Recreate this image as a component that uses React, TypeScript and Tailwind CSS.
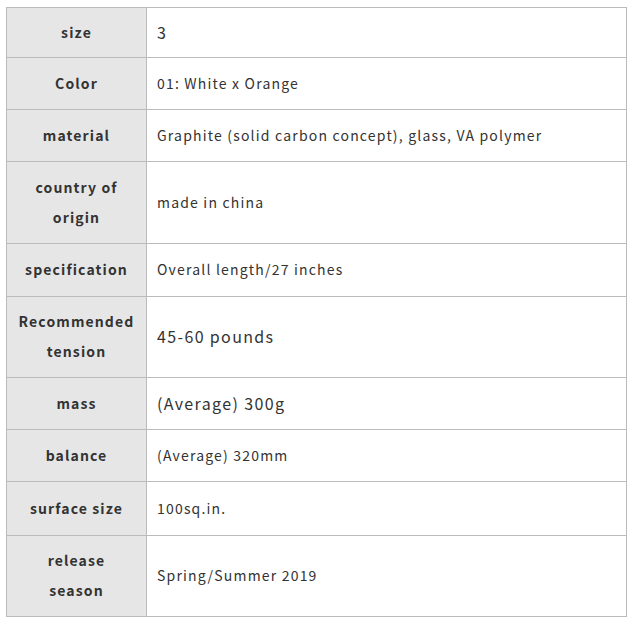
const rows: { label: string[]; value: string; big?: boolean; h: string }[] = [
  { label: ["size"], value: "3", big: true, h: "h-[50px]" },
  { label: ["Color"], value: "01: White x Orange", h: "h-[52px]" },
  { label: ["material"], value: "Graphite (solid carbon concept), glass, VA polymer", h: "h-[52px]" },
  { label: ["country of", "origin"], value: "made in china", h: "h-[82px]" },
  { label: ["specification"], value: "Overall length/27 inches", h: "h-[53px]" },
  { label: ["Recommended", "tension"], value: "45-60 pounds", big: true, h: "h-[81px]" },
  { label: ["mass"], value: "(Average) 300g", big: true, h: "h-[52px]" },
  { label: ["balance"], value: "(Average) 320mm", h: "h-[52px]" },
  { label: ["surface size"], value: "100sq.in.", h: "h-[54px]" },
  { label: ["release", "season"], value: "Spring/Summer 2019", h: "h-[81px]" },
];

export default function App() {
  return (
    <div className="bg-white w-[635px] h-[624px] pt-[7px] pl-[6px] font-['Noto_Sans_CJK_JP','Noto_Sans',sans-serif] text-[#333]">
      <table className="w-[621px] border-collapse">
        <tbody>
          {rows.map((r, i) => (
            <tr key={i} className={r.h}>
              <th className="w-[140px] bg-[#e6e6e6] border border-[#bbb] px-1 pb-[2px] text-center align-middle text-[14px] font-bold leading-[30px] tracking-[0.08em]">
                {r.label.map((l, j) => (
                  <div key={j}>{l}</div>
                ))}
              </th>
              <td
                className={
                  "border border-[#bbb] pl-[10px] pr-2 pb-[2px] align-middle leading-[30px] tracking-[0.085em] " +
                  (r.big ? "text-[16px]" : "text-[14px]")
                }
              >
                {r.value}
              </td>
            </tr>
          ))}
        </tbody>
      </table>
    </div>
  );
}
